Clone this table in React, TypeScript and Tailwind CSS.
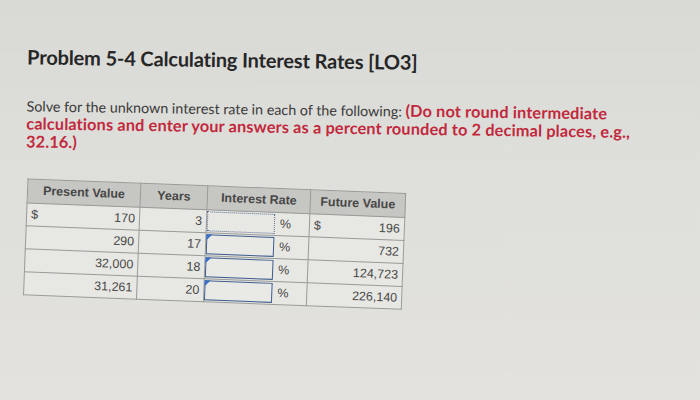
import React from "react";

const rows = [
  { pv: "170", years: "3", fv: "196", first: true },
  { pv: "290", years: "17", fv: "732" },
  { pv: "32,000", years: "18", fv: "124,723" },
  { pv: "31,261", years: "20", fv: "226,140" },
];

export default function App() {
  return (
    <div className="w-[700px] h-[400px] overflow-hidden bg-gradient-to-b from-[#d9d9d6] via-[#dfdfdb] to-[#e3e2dd] font-['Lato',sans-serif]">
      <div className="rotate-[0.8deg] origin-top-left pl-[28px] pt-[43px]">
        <h1 className="text-[20px] leading-[26px] font-bold text-[#262626] tracking-[-0.15px]">
          Problem 5-4 Calculating Interest Rates [LO3]
        </h1>
        <p className="mt-[27px] text-[14.3px] leading-[17px] text-[#3a3a3a] w-[680px]">
          Solve for the unknown interest rate in each of the following:{" "}
          <span className="font-bold text-[16.3px] tracking-[0.15px] text-[#c2283c]">
            (Do not round intermediate
            <br />
            calculations and enter your answers as a percent rounded to 2 decimal places, e.g.,
            <br />
            32.16.)
          </span>
        </p>
        <table className="mt-[28px] ml-[2px] rotate-[1.4deg] origin-top-left border-collapse font-['Liberation_Sans',sans-serif] text-[12.5px] text-[#474747]">
          <thead>
            <tr className="bg-[#c6c6c3] h-[24px]">
              <th className="w-[113px] border border-[#9a9a98] font-bold text-center">Present Value</th>
              <th className="w-[67px] border border-[#9a9a98] font-bold text-center">Years</th>
              <th className="w-[103px] border border-[#9a9a98] font-bold text-center">Interest Rate</th>
              <th className="w-[95px] border border-[#9a9a98] font-bold text-center">Future Value</th>
            </tr>
          </thead>
          <tbody className="bg-[#e7e7e4]">
            {rows.map((r, i) => (
              <tr key={i} className="h-[22px]">
                <td className="border border-[#9a9a98] px-[4px]">
                  <div className="flex justify-between">
                    <span>{r.first ? "$" : ""}</span>
                    <span>{r.pv}</span>
                  </div>
                </td>
                <td className="border border-[#9a9a98] px-[4px] text-right">{r.years}</td>
                <td className="border border-[#9a9a98] p-0">
                  <div className="flex items-center h-[22px]">
                    <div
                      className={
                        r.first
                          ? "relative w-[68px] h-[20px] border-[1.5px] border-dotted border-[#5d6f8e] bg-transparent"
                          : "relative w-[68px] h-[20px] border-[1.5px] border-[#3f5d8c] bg-[#e9e9e6]"
                      }
                    >
                      {!r.first && (
                        <span className="absolute -left-[1.5px] -top-[1.5px] w-0 h-0 border-t-[6px] border-t-[#3b6fc4] border-r-[6px] border-r-transparent" />
                      )}
                    </div>
                    <span className="ml-[5px]">%</span>
                  </div>
                </td>
                <td className="border border-[#9a9a98] px-[4px]">
                  <div className="flex justify-between">
                    <span>{r.first ? "$" : ""}</span>
                    <span>{r.fv}</span>
                  </div>
                </td>
              </tr>
            ))}
          </tbody>
        </table>
      </div>
    </div>
  );
}
